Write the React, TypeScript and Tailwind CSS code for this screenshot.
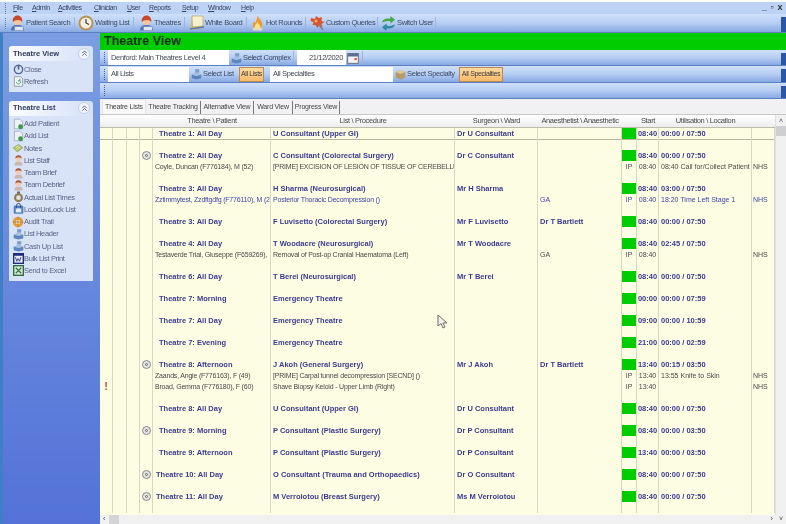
import type { ReactNode } from "react";

const COLS =
  "grid grid-cols-[13px_14px_13px_13px_118px_184px_83px_84px_15px_22px_93px_23px]";

type RowData = {
  kind: "title" | "sub" | "link" | "blank";
  alert?: boolean;
  marker?: boolean;
  indent?: boolean;
  theatre?: string;
  list?: string;
  surgeon?: string;
  anaes?: string;
  ip?: boolean;
  start?: string;
  util?: string;
  loc?: string;
  selected?: boolean;
};

const blank: RowData = { kind: "blank" };

function title(
  theatre: string,
  list: string,
  surgeon: string,
  start: string,
  util: string,
  anaes = "",
  marker = false,
  indent = true,
): RowData {
  return { kind: "title", theatre, list, surgeon, start, util, anaes, marker, indent };
}

const rows: RowData[] = [
  { ...title("Theatre 1: All Day", "U Consultant (Upper GI)", "Dr U Consultant", "08:40", "00:00 / 07:50"), selected: true },
  blank,
  title("Theatre 2: All Day", "C Consultant (Colorectal Surgery)", "Dr C Consultant", "08:40", "00:00 / 07:50", "", true),
  { kind: "sub", theatre: "Coyle, Duncan (F776184), M (52)", list: "[PRIME]  EXCISION OF LESION OF TISSUE OF CEREBELLUM", ip: true, start: "08:40", util: "08:40  Call for/Collect Patient T", loc: "NHS" },
  blank,
  title("Theatre 3: All Day", "H Sharma (Neurosurgical)", "Mr H Sharma", "08:40", "03:00 / 07:50"),
  { kind: "link", theatre: "Zztimmytest, Zzdftgdfg (F776110), M (28)", list: "Posterior Thoracic Decompression ()", anaes: "GA", ip: true, start: "08:40", util: "18:20  Time Left Stage 1", loc: "NHS" },
  blank,
  title("Theatre 3: All Day", "F Luvisetto (Colorectal Surgery)", "Mr F Luvisetto", "08:40", "00:00 / 07:50", "Dr T Bartlett"),
  blank,
  title("Theatre 4: All Day", "T Woodacre (Neurosurgical)", "Mr T Woodacre", "08:40", "02:45 / 07:50"),
  { kind: "sub", theatre: "Testaverde Trial, Giuseppe (F659269),", list: "Removal of Post-op Cranial Haematoma (Left)", anaes: "GA", ip: true, start: "08:40", loc: "NHS" },
  blank,
  title("Theatre 6: All Day", "T Berei (Neurosurgical)", "Mr T Berei", "08:40", "00:00 / 07:50"),
  blank,
  title("Theatre 7: Morning", "Emergency Theatre", "", "00:00", "00:00 / 07:59"),
  blank,
  title("Theatre 7: All Day", "Emergency Theatre", "", "09:00", "00:00 / 10:59"),
  blank,
  title("Theatre 7: Evening", "Emergency Theatre", "", "21:00", "00:00 / 02:59"),
  blank,
  title("Theatre 8: Afternoon", "J Akoh (General Surgery)", "Mr J Akoh", "13:40", "00:15 / 03:50", "Dr T Bartlett", true),
  { kind: "sub", theatre: "Zaands, Angie (F776163), F (49)", list: "[PRIME]  Carpal tunnel decompression  [SECND] ()", ip: true, start: "13:40", util: "13:55  Knife to Skin", loc: "NHS" },
  { kind: "sub", alert: true, theatre: "Broad, Gemma (F776180), F (60)", list: "Shave Biopsy Keloid - Upper Limb (Right)", ip: true, start: "13:40", loc: "NHS" },
  blank,
  title("Theatre 8: All Day", "U Consultant (Upper GI)", "Dr U Consultant", "08:40", "00:00 / 07:50"),
  blank,
  title("Theatre 9: Morning", "P Consultant (Plastic Surgery)", "Dr P Consultant", "08:40", "00:00 / 03:50", "", true),
  blank,
  title("Theatre 9: Afternoon", "P Consultant (Plastic Surgery)", "Dr P Consultant", "13:40", "00:00 / 03:50"),
  blank,
  title("Theatre 10: All Day", "O Consultant (Trauma and Orthopaedics)", "Dr O Consultant", "08:40", "00:00 / 07:50", "", true, false),
  blank,
  title("Theatre 11: All Day", "M Verroiotou (Breast Surgery)", "Ms M Verroiotou", "08:40", "00:00 / 07:50", "", true, false),
  blank,
];

function Person() {
  return (
    <svg width="15" height="16" viewBox="0 0 16 16" className="shrink-0">
      <path d="M1 16c0-4 2-6 7-6s7 2 7 6z" fill="#4f78c0" />
      <rect x="5" y="12" width="9" height="4" fill="#dfe8f6" stroke="#7d8fb0" strokeWidth=".5" />
      <circle cx="8" cy="6" r="4.2" fill="#f2c4a0" />
      <path d="M3 7C2 2 6 0 8 0s6 2 5 7c-1-3-8-3-10 0z" fill="#c8482c" />
    </svg>
  );
}

function Clock() {
  return (
    <svg width="16" height="16" viewBox="0 0 16 16" className="shrink-0">
      <circle cx="8" cy="8" r="7.5" fill="#b98f5a" />
      <circle cx="8" cy="8" r="5.6" fill="#f3eedd" />
      <path d="M8 4v4l3 1.500" stroke="#3a3a3a" strokeWidth="1.200" fill="none" />
    </svg>
  );
}

function Board() {
  return (
    <svg width="16" height="16" viewBox="0 0 16 16" className="shrink-0">
      <path d="M2 1l1 11 11-1V13L2 15z" fill="#d7b74a" />
      <path d="M3 1h11v10l-10.500 1z" fill="#f4f0cf" stroke="#b49a3e" strokeWidth=".6" />
      <path d="M1 14l14-2" stroke="#5d78b8" strokeWidth="1.300" />
    </svg>
  );
}

function Flame() {
  return (
    <svg width="15" height="16" viewBox="0 0 16 16" className="shrink-0">
      <path d="M8 0c1 3 5 5 5 10a5 5 0 01-10 0c0-2 1-3 2-4 0 1 .5 2 1 2 .5-3 2-5 2-8z" fill="#ed9a2c" />
      <path d="M8 7c.5 2 3 3 3 5a3 3 0 01-6 0c0-2 2.500-3 3-5z" fill="#fbe38b" />
      <rect x="3" y="13" width="10" height="3" rx="1" fill="#e9d9b8" />
    </svg>
  );
}

function Splat() {
  return (
    <svg width="16" height="16" viewBox="0 0 16 16" className="shrink-0">
      <path d="M1 3l4 1 1-3 3 2 3-1-.5 4 3 1-3 2 1 3-4-1-1 2-2-3-3 0 1-3-3-1z" fill="#d9552f" />
      <path d="M9 10l4 5" stroke="#7a7f96" strokeWidth="1.600" />
      <circle cx="6" cy="6" r="1.500" fill="#f3b35c" />
    </svg>
  );
}

function SwitchArrows() {
  return (
    <svg width="15" height="15" viewBox="0 0 16 16" className="shrink-0">
      <path d="M1 7c1-4 5-5 9-4V0l5 4-5 4V5.500C6 5 4 6 1 7z" fill="#47a64a" />
      <path d="M15 9c-1 4-5 5-9 4v3l-5-4 5-4v2.500c4 .5 6-.5 9-1.500z" fill="#2f8ba0" />
    </svg>
  );
}

function SelectIcon() {
  return (
    <svg width="11" height="12" viewBox="0 0 16 16" className="shrink-0">
      <rect x="6" y="1" width="6" height="5" fill="#7d9ecb" />
      <path d="M1 9l7-3 7 3v5l-7 2-7-2z" fill="#5c86bd" />
      <path d="M1 9l7 2 7-2-7-3z" fill="#a9c3e3" />
    </svg>
  );
}

function BoxIcon() {
  return (
    <svg width="11" height="12" viewBox="0 0 16 16" className="shrink-0">
      <path d="M1 5l7-3 7 3v8l-7 3-7-3z" fill="#b89a68" />
      <path d="M1 5l7 3 7-3-7-3z" fill="#ddc79c" />
    </svg>
  );
}

function CalendarIcon() {
  return (
    <svg width="12" height="12" viewBox="0 0 16 16" className="shrink-0">
      <rect x="1" y="2" width="14" height="13" fill="#f4f4f4" stroke="#555" />
      <rect x="1" y="2" width="14" height="4" fill="#5a6e98" />
      <rect x="10" y="8" width="3" height="3" fill="#d05a3c" />
    </svg>
  );
}

function DocPlus() {
  return (
    <svg width="11" height="12" viewBox="0 0 16 16">
      <path d="M2 1h8l4 4v10H2z" fill="#eef2f6" stroke="#8fa0b5" />
      <circle cx="11" cy="12" r="3.500" fill="#3f9a47" />
    </svg>
  );
}

function Notes() {
  return (
    <svg width="12" height="11" viewBox="0 0 16 16">
      <path d="M1 7l8-5 6 5-8 6z" fill="#b7c66a" stroke="#7c8a3a" strokeWidth=".8" />
      <path d="M4 7l5-3M6 9l5-3" stroke="#eef2c8" />
    </svg>
  );
}

function Staff() {
  return (
    <svg width="11" height="12" viewBox="0 0 16 16">
      <path d="M2 16c0-4 2-6 6-6s6 2 6 6z" fill="#c9b7b0" />
      <circle cx="8" cy="6" r="4" fill="#f3cdb3" />
      <path d="M3.500 6C3 2 6 1 8 1s5 1 4.500 5C11 4 5 4 3.500 6z" fill="#a55d3c" />
    </svg>
  );
}

function Timer() {
  return (
    <svg width="11" height="12" viewBox="0 0 16 16">
      <circle cx="8" cy="9" r="6.500" fill="#8f7a55" />
      <circle cx="8" cy="9" r="3.500" fill="#dfe3df" />
      <rect x="6" y="0" width="4" height="3" fill="#6c5f48" />
    </svg>
  );
}

function LockIcon() {
  return (
    <svg width="11" height="12" viewBox="0 0 16 16">
      <rect x="1" y="3" width="14" height="12" rx="2" fill="#4d7fc4" />
      <rect x="4" y="7" width="8" height="6" fill="#e4edf8" />
      <path d="M5 7V3a3 3 0 016 0v4" stroke="#3a4f74" fill="none" strokeWidth="1.400" />
    </svg>
  );
}

function Audit() {
  return (
    <svg width="12" height="12" viewBox="0 0 16 16">
      <circle cx="8" cy="8" r="7" fill="#e0a23d" />
      <circle cx="8" cy="8" r="3" fill="#f6e3b2" />
      <path d="M8 1v14M1 8h14" stroke="#c0703a" />
    </svg>
  );
}

function WordIcon() {
  return (
    <svg width="11" height="11" viewBox="0 0 16 16">
      <rect width="16" height="16" fill="#1f2a78" />
      <rect x="2" y="4" width="12" height="10" fill="#e9ecf7" />
      <path d="M3.500 6l2 6 2-4 2 4 2-6" stroke="#1f2a78" fill="none" strokeWidth="1.200" />
    </svg>
  );
}

function ExcelIcon() {
  return (
    <svg width="11" height="11" viewBox="0 0 16 16">
      <rect width="16" height="16" fill="#2f6f3d" />
      <rect x="2" y="2" width="12" height="12" fill="#dcebd9" />
      <path d="M4 4l8 8M12 4l-8 8" stroke="#2f6f3d" strokeWidth="1.600" />
    </svg>
  );
}

function PowerIcon() {
  return (
    <svg width="11" height="11" viewBox="0 0 16 16">
      <circle cx="8" cy="8" r="6" fill="none" stroke="#50628e" strokeWidth="2" />
      <path d="M8 1v7" stroke="#50628e" strokeWidth="2.400" />
    </svg>
  );
}

function RefreshIcon() {
  return (
    <svg width="11" height="11" viewBox="0 0 16 16">
      <path d="M2 1h9l3 3v11H2z" fill="#f2f5f6" stroke="#75877f" />
      <path d="M5 9a3 3 0 105-2.500M10 4v3H7" stroke="#3f9470" fill="none" strokeWidth="1.300" />
    </svg>
  );
}

function Grip({ light = false }: { light?: boolean }) {
  return (
    <div
      className={`w-[2px] h-[11px] shrink-0 border-l border-dotted ${
        light ? "border-[#45618f]" : "border-[#5b769f]"
      }`}
    />
  );
}

function ToolbarBand({ className, children }: { className: string; children?: ReactNode }) {
  return (
    <div
      className={`relative flex items-center bg-gradient-to-b from-[#cfe0fa] via-[#b6cef3] to-[#88a9e2] border-b border-[#5d80c4] ${className}`}
    >
      {children}
      <div className="absolute right-0 top-[3px] bottom-0 w-[5px] bg-[#2b56a6]" />
    </div>
  );
}

function ToolButton({ icon, label, className }: { icon: ReactNode; label: string; className: string }) {
  return (
    <div className={`flex items-center shrink-0 text-[7.5px] tracking-[-0.35px] text-[#3d4a66] ${className}`}>
      {icon}
      <span className="whitespace-nowrap">{label}</span>
    </div>
  );
}

function Sep() {
  return <div className="w-px h-[13px] bg-[#9db4d8] shrink-0" />;
}

function TextBox({ text, className }: { text: string; className: string }) {
  return (
    <div className={`h-[15px] bg-white flex items-center px-[3px] text-[7.5px] tracking-[-0.35px] text-[#45495a] whitespace-nowrap shrink-0 ${className}`}>
      {text}
    </div>
  );
}

function OrangeButton({ label, className }: { label: string; className: string }) {
  return (
    <div
      className={`h-[15px] flex items-center justify-center shrink-0 text-[7px] tracking-[-0.35px] text-[#3d3a40] whitespace-nowrap bg-gradient-to-b from-[#fddca0] to-[#f9b868] border border-[#b58a55] ${className}`}
    >
      {label}
    </div>
  );
}

function Menu({ first, rest, className }: { first: string; rest: string; className: string }) {
  return (
    <span className={`whitespace-nowrap shrink-0 ${className}`}>
      <span className="underline">{first}</span>
      {rest}
    </span>
  );
}

function Chevron() {
  return (
    <div className="w-[12px] h-[12px] rounded-full bg-[#f3f6fd] border border-[#c3cfe8] flex items-center justify-center">
      <svg width="7" height="7" viewBox="0 0 8 8">
        <path d="M1.500 3.500L4 1l2.500 2.500M1.500 6.500L4 4l2.500 2.500" stroke="#46557e" fill="none" strokeWidth="1" />
      </svg>
    </div>
  );
}

function SideLink({ icon, label }: { icon: ReactNode; label: string }) {
  return (
    <div className="flex items-center h-[12.25px] text-[7.5px] tracking-[-0.35px] text-[#5b6488] whitespace-nowrap">
      <div className="w-[12px] flex justify-center shrink-0">{icon}</div>
      {label}
    </div>
  );
}

function SidePanel({ heading, className, children }: { heading: string; className: string; children: ReactNode }) {
  return (
    <div className={`w-[84px] ml-[9px] ${className}`}>
      <div className="h-[15px] rounded-t-[3px] bg-gradient-to-r from-[#fbfcff] to-[#d5e1f8] flex items-center justify-between pl-[4px] pr-[3px] text-[7.5px] font-bold text-[#2f3a5f]">
        {heading}
        <Chevron />
      </div>
      <div className="bg-[#d9e3f7] px-[3px] pt-[2px] pb-[4px]">{children}</div>
    </div>
  );
}

function Cell({ className = "", children }: { className?: string; children?: ReactNode }) {
  return (
    <div className={`border-r border-[#d9d9c2] overflow-hidden whitespace-nowrap ${className}`}>{children}</div>
  );
}

function GridRow({ row }: { row: RowData }) {
  const isTitle = row.kind === "title";
  const base = isTitle
    ? "font-bold text-[#3b3a94]"
    : row.kind === "link"
      ? "text-[#4246ac]"
      : "text-[#4a4a4a]";
  const small = "text-[7px] tracking-[-0.2px]";
  return (
    <div
      className={`${COLS} h-[11px] shrink-0 text-[7.5px] leading-[11px] ${base} ${
        row.selected ? "outline outline-1 outline-[#b5b5a0]" : ""
      }`}
    >
      <Cell className="flex items-center justify-center">
        {row.alert ? <span className="text-[11px] font-bold text-[#c0503c]">!</span> : null}
      </Cell>
      <Cell />
      <Cell />
      <Cell className="flex items-center justify-center overflow-visible">
        {row.marker ? (
          <div className="w-[9px] h-[9px] rounded-full bg-[#e4e4e0] border border-[#8a8a90] flex items-center justify-center">
            <div className="w-[3px] h-[3px] rounded-full border border-[#666]" />
          </div>
        ) : null}
      </Cell>
      <Cell className={isTitle ? (row.indent ? "pl-[6px]" : "pl-[3px]") : `pl-[2px] ${small}`}>{row.theatre}</Cell>
      <Cell className={isTitle ? "pl-[2px]" : `pl-[2px] ${small}`}>{row.list}</Cell>
      <Cell className="pl-[2px]">{row.surgeon}</Cell>
      <Cell className={`pl-[2px] ${isTitle ? "" : "text-[7px]"}`}>{row.anaes}</Cell>
      <Cell className={`text-center text-[7px] ${isTitle ? "bg-[#00cc00]" : ""}`}>{row.ip ? "IP" : ""}</Cell>
      <Cell className={`text-center ${isTitle ? "" : "text-[7px]"}`}>{row.start}</Cell>
      <Cell className={`pl-[2px] ${isTitle ? "" : "text-[7px]"}`}>{row.util}</Cell>
      <Cell className="pl-[1px] text-[7px]">{row.loc}</Cell>
    </div>
  );
}

export default function App() {
  return (
    <div className="relative w-[786px] h-[524px] overflow-hidden flex flex-col bg-white font-['Liberation_Sans',sans-serif] blur-[0.35px]">
      {/* menu + main toolbar */}
      <div className="h-[2px] bg-white shrink-0" />
      <div className="h-[12px] shrink-0 relative flex items-center pl-[5px] bg-[#bcd3f6] text-[7px] tracking-[-0.4px] text-[#3c4660]">
        <Grip />
        <Menu first="F" rest="ile" className="ml-[6px] w-[9px]" />
        <Menu first="A" rest="dmin" className="ml-[10px] w-[17px]" />
        <Menu first="A" rest="ctivities" className="ml-[9px] w-[27px]" />
        <Menu first="C" rest="linician" className="ml-[9px] w-[24px]" />
        <Menu first="U" rest="ser" className="ml-[9px] w-[13px]" />
        <Menu first="R" rest="eports" className="ml-[9px] w-[24px]" />
        <Menu first="S" rest="etup" className="ml-[9px] w-[17px]" />
        <Menu first="W" rest="indow" className="ml-[9px] w-[23px]" />
        <Menu first="H" rest="elp" className="ml-[10px] w-[13px]" />
        <div className="ml-auto mr-[4px] flex items-center gap-[4px] text-[9px] font-bold text-[#333]">
          <span>_</span>
          <span>▫</span>
          <span>x</span>
        </div>
      </div>
      <ToolbarBand className="h-[19px] shrink-0 pl-[5px]">
        <Grip />
        <ToolButton icon={<Person />} label="Patient Search" className="ml-[3px] gap-[1px] w-[60px]" />
        <div className="ml-[4px]"><Sep /></div>
        <ToolButton icon={<Clock />} label="Waiting List" className="ml-[3px] gap-[1px] w-[51px]" />
        <div className="ml-[4px]"><Sep /></div>
        <ToolButton icon={<Person />} label="Theatres" className="ml-[5px] w-[41px]" />
        <div className="ml-[4px]"><Sep /></div>
        <ToolButton icon={<Board />} label="White Board" className="ml-[4px] w-[54px]" />
        <div className="ml-[3px]"><Sep /></div>
        <ToolButton icon={<Flame />} label="Hot Rounds" className="ml-[3px] gap-[1px] w-[50px]" />
        <div className="ml-[5px]"><Sep /></div>
        <ToolButton icon={<Splat />} label="Custom Queries" className="ml-[4px] w-[63px]" />
        <div className="ml-[4px]"><Sep /></div>
        <ToolButton icon={<SwitchArrows />} label="Switch User" className="ml-[3px] gap-[1px] w-[50px]" />
        <div className="ml-[4px]"><Sep /></div>
      </ToolbarBand>

      <div className="flex flex-1 min-h-0">
        {/* left task pane */}
        <div className="w-[100px] shrink-0 pt-[13px] bg-gradient-to-b from-[#7b9de2] to-[#5472d8] border-l-[3px] border-[#3f7fc6]">
          <div className="-ml-[3px]">
            <SidePanel heading="Theatre View" className="mb-[9px]">
              <SideLink icon={<PowerIcon />} label="Close" />
              <SideLink icon={<RefreshIcon />} label="Refresh" />
            </SidePanel>
            <SidePanel heading="Theatre List" className="">
              <SideLink icon={<DocPlus />} label="Add Patient" />
              <SideLink icon={<DocPlus />} label="Add List" />
              <SideLink icon={<Notes />} label="Notes" />
              <SideLink icon={<Staff />} label="List Staff" />
              <SideLink icon={<Staff />} label="Team Brief" />
              <SideLink icon={<Staff />} label="Team Debrief" />
              <SideLink icon={<Timer />} label="Actual List Times" />
              <SideLink icon={<LockIcon />} label="Lock\UnLock List" />
              <SideLink icon={<Audit />} label="Audit Trail" />
              <SideLink icon={<SelectIcon />} label="List Header" />
              <SideLink icon={<SelectIcon />} label="Cash Up List" />
              <SideLink icon={<WordIcon />} label="Bulk List Print" />
              <SideLink icon={<ExcelIcon />} label="Send to Excel" />
            </SidePanel>
          </div>
        </div>

        {/* main area */}
        <div className="flex-1 min-w-0 flex flex-col">
          <div className="h-[17px] shrink-0 bg-[#00cc00] flex items-center pl-[4px] text-[12.5px] font-bold text-[#0d2a12]">
            Theatre View
          </div>
          <ToolbarBand className="h-[16px] shrink-0 pl-[4px]">
            <Grip light />
            <TextBox text="Denford: Main Theatres Level 4" className="ml-[2px] w-[121px]" />
            <ToolButton icon={<SelectIcon />} label="Select Complex" className="ml-[2px] gap-[1px] w-[62px]" />
            <Sep />
            <TextBox text="21/12/2020" className="ml-[3px] w-[49px] justify-end" />
            <div className="ml-[1px]"><CalendarIcon /></div>
            <div className="ml-[3px]"><Sep /></div>
          </ToolbarBand>
          <ToolbarBand className="h-[17px] shrink-0 pl-[4px]">
            <Grip light />
            <TextBox text="All Lists" className="ml-[2px] w-[81px]" />
            <ToolButton icon={<SelectIcon />} label="Select List" className="ml-[2px] gap-[1px] w-[46px]" />
            <OrangeButton label="All Lists" className="ml-[2px] w-[25px]" />
            <TextBox text="All Specialties" className="ml-[6px] w-[123px]" />
            <ToolButton icon={<BoxIcon />} label="Select Specialty" className="ml-[2px] gap-[1px] w-[62px]" />
            <OrangeButton label="All Specialties" className="ml-[2px] w-[44px]" />
          </ToolbarBand>
          <ToolbarBand className="h-[16px] shrink-0 pl-[4px]">
            <Grip light />
          </ToolbarBand>

          {/* tabs */}
          <div className="h-[15px] shrink-0 bg-[#f1f1f3] flex items-end pl-[2px] text-[7px] tracking-[-0.2px] text-[#444] whitespace-nowrap">
            <div className="h-[15px] w-[44px] flex items-center justify-center bg-[#f8f8f8] border-t border-x border-[#e4e4e4]">Theatre Lists</div>
            <div className="h-[13px] w-[55px] flex items-center justify-center border-r border-[#777]">Theatre Tracking</div>
            <div className="h-[13px] w-[53px] flex items-center justify-center border-r border-[#777]">Alternative View</div>
            <div className="h-[13px] w-[39px] flex items-center justify-center border-r border-[#777]">Ward View</div>
            <div className="h-[13px] w-[47px] flex items-center justify-center border-r border-[#777]">Progress View</div>
          </div>

          {/* grid + vertical scrollbar */}
          <div className="flex flex-1 min-h-0 border-t border-[#c8c8c8]">
            <div className="flex-1 min-w-0 flex flex-col">
              <div className={`${COLS} h-[13px] shrink-0 bg-gradient-to-b from-white to-[#ededed] border-b border-[#bcbca8] text-[7.5px] tracking-[-0.35px] leading-[12px] text-[#4a4a4a] text-center whitespace-nowrap`}>
                <div />
                <div />
                <div />
                <div />
                <div>Theatre \ Patient</div>
                <div>List \ Procedure</div>
                <div>Surgeon \ Ward</div>
                <div>Anaesthetist \ Anaesthetic</div>
                <div />
                <div>Start</div>
                <div>Utilisation \ Location</div>
                <div />
              </div>
              <div className="flex-1 min-h-0 flex flex-col bg-[#fdfde3] overflow-hidden">
                {rows.map((row, i) => (
                  <GridRow key={i} row={row} />
                ))}
              </div>
            </div>
            <div className="w-[11px] shrink-0 bg-[#f1f1f1] flex flex-col items-center border-l border-[#e0e0e0]">
              <span className="h-[11px] text-[7px] leading-[11px] text-[#555]">˄</span>
              <div className="w-[10px] h-[10px] bg-[#cfcfd2]" />
            </div>
          </div>

          {/* horizontal scrollbar */}
          <div className="h-[9px] shrink-0 bg-[#f1f1f1] flex items-center pl-[3px] pr-[3px] text-[7px] text-[#444]">
            <span>‹</span>
            <div className="ml-[4px] w-[10px] h-[9px] bg-[#d4d4d6]" />
            <span className="ml-auto">›</span>
            <span className="ml-[6px]">˅</span>
          </div>
        </div>
      </div>

      {/* mouse pointer */}
      <svg className="absolute left-[437px] top-[314px]" width="11" height="15" viewBox="0 0 11 15">
        <path d="M1 1v11l3-2.500 2 4.500 2-1-2-4h4z" fill="#f4f4ea" stroke="#6d6d6d" strokeWidth="1" />
      </svg>
    </div>
  );
}
